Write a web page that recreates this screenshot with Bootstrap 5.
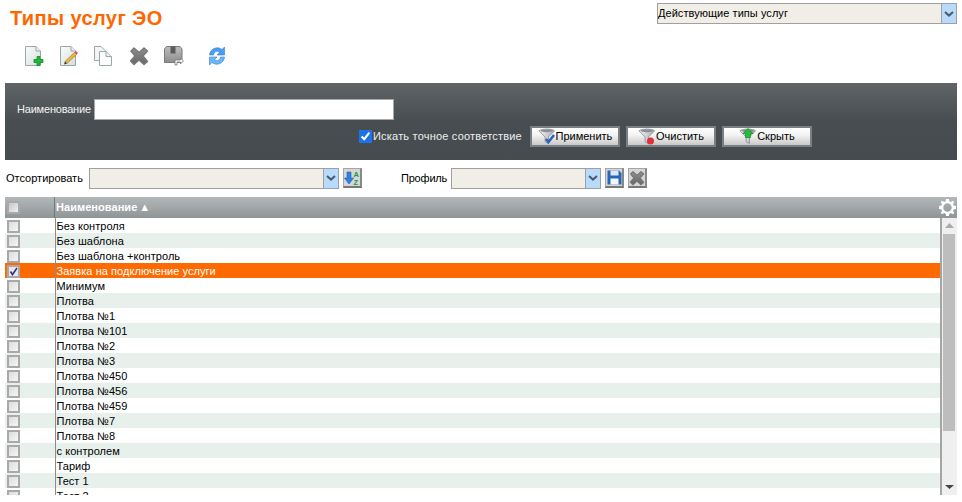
<!DOCTYPE html>
<html lang="ru">
<head>
  <meta charset="UTF-8" />
  <meta name="viewport" content="width=device-width, initial-scale=1.0"/>
  <title>Типы услуг ЭО</title>
  <link href="https://cdn.jsdelivr.net/npm/bootstrap@5.3.0/dist/css/bootstrap.min.css" rel="stylesheet"/>
  <style>
    html, body { height: 100%; overflow: hidden; }
    body {
      background: #fff;
      color: #000;
      font-family: "Liberation Sans", Arial, sans-serif;
      font-size: 11px;
      line-height: 15px;
      letter-spacing: .05px;
    }
    .page-wrap { padding: 3px 5px 0 5px; width: 962px; }

    .top-row { height: 42px; }
    .page-title {
      margin: 3px 0 0 5px;
      color: #ff6600;
      font-size: 20px;
      line-height: 24px;
      font-weight: 700;
      letter-spacing: .4px;
    }
    .fake-select {
      display: flex;
      height: 21px;
      border: 1px solid #a0a0a0;
      background: #f1eee7;
    }
    .fake-select .val { flex: 1 1 auto; padding: 2px 0 0 0; white-space: nowrap; overflow: hidden; }
    .fake-select .arr {
      width: 15px;
      flex: 0 0 15px;
      background: #b9dbfb;
      border-left: 1px solid #a0a0a0;
      display: flex; align-items: center; justify-content: center;
    }
    .sel-state { width: 300px; }
    .sel-sort { width: 250px; }
    .sel-prof { width: 150px; }

    .tool-row { height: 38px; padding: 1px 0 0 20px; }
    .tool-btn { display: block; width: 20px; height: 20px; }
    .tool-row .tool-btn { margin-right: 14.5px; }
    .tool-row .tool-btn.far { margin-left: 1px; margin-right: 23px; }

    .filter-box {
      height: 77px;
      padding: 16px 0 0 12px;
      color: #fff;
      background: linear-gradient(#5f6467 0, #484d51 50%, #464b4f 100%);
    }
    .filter-box input[type=text] {
      display: block;
      width: 300px;
      height: 21px;
      margin-left: 3px;
      border: 1px solid #a8a8a8;
      background: #fff;
      padding: 0 2px;
    }
    .filter-lbl { color: #f4f4f4; letter-spacing: -.2px; white-space: nowrap; }
    .opts-row { margin-top: 6px; margin-left: 342px; height: 21px; }
    .opts-row input { width: 13px; height: 13px; margin: 0 1px 0 0; accent-color: #1a73e8; }
    .opts-row .chk-lbl { margin-right: 8px; color: #eee; letter-spacing: .2px; }
    .flt-btn {
      width: 90px;
      height: 21px;
      margin-right: 6px;
      padding: 0;
      color: #000;
      font-size: 11px;
      border: 2px solid #7c7f82;
      border-radius: 0;
      background: linear-gradient(#fff 0, #f4f4f4 40%, #c9c9c9 100%);
      display: flex; align-items: center; justify-content: center;
    }

    .sort-row { height: 20px; margin: 8px 0 9px 0; }
    .sort-lbl { margin: 0 5px 0 1px; width: 78px; letter-spacing: 0; white-space: nowrap; }
    .prof-lbl { margin: 0 5px 0 39px; width: 45px; letter-spacing: -.2px; white-space: nowrap; }
    .sq-btn {
      width: 19px; height: 20px; margin-left: 4px;
      background: #d6d6d6;
      border: 1px solid #a5a5a5;
      border-bottom: 2px solid #777;
      border-right: 2px solid #888;
      display: flex; align-items: center; justify-content: center;
      padding: 0;
    }

    .grid-head {
      height: 21px;
      color: #fff;
      font-weight: 700;
      background: linear-gradient(#b3b8bb 0, #8f9497 100%);
    }
    .grid-head .cell-chk { width: 50px; flex: 0 0 50px; border-right: 1px solid #777; height: 100%; padding: 4px 0 0 2px; }
    .grid-head .cell-name { padding-left: 1px; flex: 1 1 auto; }
    .grid-head .sort-mark { margin-left: 2px; }
    .grid-head .gear { margin-right: 1px; display: block; }

    .grid-body { height: 277px; overflow: hidden; }
    .grid-rows { width: 937px; flex: 0 0 937px; border-right: 2px solid #a5a5a5; overflow: hidden; }
    .grid-tbl { width: 100%; margin: 0; border-collapse: collapse; table-layout: fixed; }
    .grid-tbl td { height: 15px; padding: 0; line-height: 15px; border: 0; overflow: hidden; white-space: nowrap; }
    .grid-tbl .c1 { width: 50px; border-right: 1px solid #8b8b8b; padding-left: 2px; }
    .grid-tbl .c2 { padding: 1px 0 0 1px; line-height: 14px; }
    .grid-tbl tr:nth-child(even) td { background: #e8f0ec; }
    .grid-tbl tr.picked td { background: #ff6a00; color: #fff; }
    .row-chk {
      display: block;
      appearance: none;
      width: 13px; height: 13px; margin: 1px 0 0 0;
      border: 2px solid #a9a9a9;
      background: linear-gradient(135deg, #dcdcdc, #f6f6f6);
    }
    .row-chk:checked {
      background: #e6e6ee url("data:image/svg+xml,%3Csvg xmlns='http://www.w3.org/2000/svg' viewBox='0 0 9 9'%3E%3Cpath d='M1.5 4.5L3.5 7.5L8 1' fill='none' stroke='%2333337f' stroke-width='1.6'/%3E%3C/svg%3E") center/9px 9px no-repeat;
    }
    .head-chk { display: block; width: 13px; height: 13px; margin: 0; appearance: none; border: 2px solid #a9a9a9; background: linear-gradient(135deg, #c8c8c8, #efefef); }

    .scroll-col { width: 15px; flex: 0 0 15px; background: #efefef; position: relative; }
    .scroll-up { height: 15px; display: flex; justify-content: center; align-items: center; }
    .scroll-thumb { height: 197px; width: 12px; margin: 1px 0 0 1px; background: #bdbdbd; }
    .scroll-down { position: absolute; bottom: 6px; left: 0; width: 15px; display: flex; justify-content: center; }
  </style>
</head>
<body>
  <svg width="0" height="0" class="position-absolute">
    <defs>
      <linearGradient id="pg" x1="0" y1="0" x2="1" y2="1"><stop offset="0" stop-color="#fafcfc"/><stop offset="1" stop-color="#d5dedd"/></linearGradient>
      <linearGradient id="gr" x1="0" y1="0" x2="0" y2="1"><stop offset="0" stop-color="#8f8f8f"/><stop offset="1" stop-color="#666"/></linearGradient>
      <linearGradient id="fn" x1="0" y1="0" x2="1" y2="0"><stop offset="0" stop-color="#f2f3f4"/><stop offset="1" stop-color="#a9adb0"/></linearGradient>
      <linearGradient id="bx" x1="0" y1="0" x2="0" y2="1"><stop offset="0" stop-color="#bdbdbd"/><stop offset="1" stop-color="#8e8e8e"/></linearGradient>
      <symbol id="ic-x" viewBox="0 0 20 20">
        <path d="M2 5L5 2L10 6.500L15 2L18.500 5L14 10L18.500 15.500L15 18.500L10 14L5 18.500L1.500 15L6 10Z" fill="url(#gr)" stroke="#777" stroke-linejoin="round" stroke-width="1.400"/>
      </symbol>
      <symbol id="ic-arr" viewBox="0 0 10 6">
        <path d="M1 1L5 4.600L9 1" fill="none" stroke="#4a5a70" stroke-width="2"/>
      </symbol>
      <symbol id="ic-funnel" viewBox="0 0 18 18">
        <path d="M.5 3C4 .5 14 .5 17 3L10.500 9.500V16.500L7 14.500V9.500Z" fill="url(#fn)" stroke="#7f8487" stroke-width=".8"/>
        <ellipse cx="8.700" cy="3" rx="6.500" ry="1.500" fill="#8a8f92"/>
      </symbol>
    </defs>
  </svg>

  <div class="page-wrap">
    <div class="top-row d-flex justify-content-between align-items-start">
      <h1 class="page-title">Типы услуг ЭО</h1>
      <div class="fake-select sel-state">
        <span class="val">Действующие типы услуг</span>
        <span class="arr"><svg width="10" height="6"><use href="#ic-arr"/></svg></span>
      </div>
    </div>

    <div class="tool-row d-flex align-items-start">
      <svg class="tool-btn" viewBox="0 0 20 20">
        <path d="M.5 .5H11L15.500 5V19.500H.5Z" fill="url(#pg)" stroke="#9aa8a8"/>
        <path d="M11 .5V5H15.500" fill="#e8eeee" stroke="#9aa8a8"/>
        <path d="M12 10.500H15V13.500H18V16.500H15V19.500H12V16.500H9V13.500H12Z" fill="#22b83a" stroke="#0f8a24" stroke-width=".8"/>
      </svg>
      <svg class="tool-btn" viewBox="0 0 20 20">
        <path d="M.5 .5H11L15.500 5V19.500H.5Z" fill="url(#pg)" stroke="#9aa8a8"/>
        <path d="M11 .5V5H15.500" fill="#e8eeee" stroke="#9aa8a8"/>
        <path d="M5 15.500L14.500 6.500L16.500 8.500L7 17.500Z" fill="#e9b93f" stroke="#a07d22" stroke-width=".7"/>
        <path d="M14.500 6.500L16 5L18 7L16.500 8.500Z" fill="#e2526a"/>
        <path d="M5 15.500L4 18.500L7 17.500Z" fill="#333"/>
      </svg>
      <svg class="tool-btn" viewBox="0 0 20 20">
        <path d="M.5 .5H7L11 4.500V14.500H.5Z" fill="#f1f4f4" stroke="#9aa8a8"/>
        <path d="M5.500 5.500H12L17.500 10.500V19.500H5.500Z" fill="#fbfcfc" stroke="#9aa8a8"/>
        <path d="M12 5.500V10.500H17.500" fill="#e8eeee" stroke="#9aa8a8"/>
      </svg>
      <svg class="tool-btn"><use href="#ic-x"/></svg>
      <svg class="tool-btn far" viewBox="0 0 20 20">
        <path d="M.5 3L2.500 .5H16L18 3V16.500H.5Z" fill="url(#bx)" stroke="#7a7a7a"/>
        <rect x="6.500" y=".5" width="5" height="7" fill="#5a5a5a"/>
        <path d="M11 14H16.500V12L19.500 15L16.500 18V16H13V19H11Z" fill="#fff" stroke="#777" stroke-width=".8"/>
      </svg>
      <svg class="tool-btn" viewBox="0 0 20 20">
        <path d="M2.500 9C3 3 10 -.5 15 3.500L17.500 1V9H10L12.500 6.500C9.500 4 7 6 6.500 9Z" fill="#4a9df0" stroke="#2f80d8" stroke-width=".6"/>
        <path d="M17.500 11C17 17 10 20.500 5 16.500L2.500 19V11H10L7.500 13.500C10.500 16 13 14 13.500 11Z" fill="#6db5f5" stroke="#2f80d8" stroke-width=".6"/>
      </svg>
    </div>

    <div class="filter-box">
      <div class="d-flex align-items-center">
        <label class="filter-lbl" for="fName">Наименование</label>
        <input type="text" id="fName" />
      </div>
      <div class="opts-row d-flex align-items-center">
        <input type="checkbox" id="fExact" checked />
        <label class="chk-lbl" for="fExact">Искать точное соответствие</label>
        <button type="button" class="flt-btn">
          <svg width="18" height="17"><use href="#ic-funnel"/><path d="M8 11L10.500 14L16 7" fill="none" stroke="#2a5fc0" stroke-width="2.500"/></svg>Применить
        </button>
        <button type="button" class="flt-btn">
          <svg width="18" height="17"><use href="#ic-funnel"/><circle cx="12.500" cy="13" r="3.500" fill="#e0303a"/></svg>Очистить
        </button>
        <button type="button" class="flt-btn">
          <svg width="18" height="17"><use href="#ic-funnel"/><path d="M9 .5L14 5.500H11.500V9.500H6.500V5.500H4Z" fill="#22c03a" stroke="#128a24" stroke-width=".7"/></svg>Скрыть
        </button>
      </div>
    </div>

    <div class="sort-row d-flex align-items-center">
      <label class="sort-lbl">Отсортировать</label>
      <div class="fake-select sel-sort">
        <span class="val"></span>
        <span class="arr"><svg width="10" height="6"><use href="#ic-arr"/></svg></span>
      </div>
      <button type="button" class="sq-btn">
        <svg width="16" height="16" viewBox="0 0 16 16">
          <path d="M3 2H7V8H9.500L5 14L.5 8H3Z" fill="#2f80e0" stroke="#1d5fb0" stroke-width=".6"/>
          <text x="9.500" y="7" font-size="7.500" font-weight="700" font-family="Liberation Sans" fill="#1e9a36">A</text>
          <text x="9.500" y="15" font-size="7.500" font-weight="700" font-family="Liberation Sans" fill="#1e9a36">Z</text>
        </svg>
      </button>
      <label class="prof-lbl">Профиль</label>
      <div class="fake-select sel-prof">
        <span class="val"></span>
        <span class="arr"><svg width="10" height="6"><use href="#ic-arr"/></svg></span>
      </div>
      <button type="button" class="sq-btn">
        <svg width="15" height="15" viewBox="0 0 15 15">
          <path d="M.5 .5H12L14.500 3V14.500H.5Z" fill="#2a66b8"/>
          <rect x="3.500" y=".5" width="8" height="5" fill="#dfe8f2"/>
          <rect x="3.500" y="8.500" width="8" height="6" fill="#f2f5f8"/>
        </svg>
      </button>
      <button type="button" class="sq-btn">
        <svg width="16" height="16"><use href="#ic-x"/></svg>
      </button>
    </div>

    <div class="grid-head d-flex align-items-center">
      <div class="cell-chk"><input type="checkbox" class="head-chk" aria-label="все" /></div>
      <div class="cell-name">Наименование<span class="sort-mark">▲</span></div>
      <svg class="gear" width="17" height="17" viewBox="0 0 18 18">
        <path fill="#fff" fill-rule="evenodd" d="M7.500 0H10.500L11 2.500L12.500 3.200L14.700 1.800L16.200 3.300L14.800 5.500L15.500 7L18 7.500V10.500L15.500 11L14.800 12.500L16.200 14.700L14.700 16.200L12.500 14.800L11 15.500L10.500 18H7.500L7 15.500L5.500 14.800L3.300 16.200L1.800 14.700L3.200 12.500L2.500 11L0 10.500V7.500L2.500 7L3.200 5.500L1.800 3.300L3.300 1.800L5.500 3.200L7 2.500ZM9 4.500A4.500 4.500 0 1 0 9 13.500A4.500 4.500 0 1 0 9 4.500Z"/>
      </svg>
    </div>

    <div class="grid-body d-flex">
      <div class="grid-rows">
        <table class="grid-tbl">
          <tbody>
            <tr><td class="c1"><input type="checkbox" class="row-chk" /></td><td class="c2">Без контроля</td></tr>
            <tr><td class="c1"><input type="checkbox" class="row-chk" /></td><td class="c2">Без шаблона</td></tr>
            <tr><td class="c1"><input type="checkbox" class="row-chk" /></td><td class="c2">Без шаблона +контроль</td></tr>
            <tr class="picked"><td class="c1"><input type="checkbox" class="row-chk" checked /></td><td class="c2">Заявка на подключение услуги</td></tr>
            <tr><td class="c1"><input type="checkbox" class="row-chk" /></td><td class="c2">Минимум</td></tr>
            <tr><td class="c1"><input type="checkbox" class="row-chk" /></td><td class="c2">Плотва</td></tr>
            <tr><td class="c1"><input type="checkbox" class="row-chk" /></td><td class="c2">Плотва №1</td></tr>
            <tr><td class="c1"><input type="checkbox" class="row-chk" /></td><td class="c2">Плотва №101</td></tr>
            <tr><td class="c1"><input type="checkbox" class="row-chk" /></td><td class="c2">Плотва №2</td></tr>
            <tr><td class="c1"><input type="checkbox" class="row-chk" /></td><td class="c2">Плотва №3</td></tr>
            <tr><td class="c1"><input type="checkbox" class="row-chk" /></td><td class="c2">Плотва №450</td></tr>
            <tr><td class="c1"><input type="checkbox" class="row-chk" /></td><td class="c2">Плотва №456</td></tr>
            <tr><td class="c1"><input type="checkbox" class="row-chk" /></td><td class="c2">Плотва №459</td></tr>
            <tr><td class="c1"><input type="checkbox" class="row-chk" /></td><td class="c2">Плотва №7</td></tr>
            <tr><td class="c1"><input type="checkbox" class="row-chk" /></td><td class="c2">Плотва №8</td></tr>
            <tr><td class="c1"><input type="checkbox" class="row-chk" /></td><td class="c2">с контролем</td></tr>
            <tr><td class="c1"><input type="checkbox" class="row-chk" /></td><td class="c2">Тариф</td></tr>
            <tr><td class="c1"><input type="checkbox" class="row-chk" /></td><td class="c2">Тест 1</td></tr>
            <tr><td class="c1"><input type="checkbox" class="row-chk" /></td><td class="c2">Тест 2</td></tr>
          </tbody>
        </table>
      </div>
      <div class="scroll-col">
        <div class="scroll-up"><svg width="9" height="5"><path d="M0 5L4.500 0L9 5Z" fill="#aaa"/></svg></div>
        <div class="scroll-thumb"></div>
        <div class="scroll-down"><svg width="9" height="4"><path d="M0 0H9L4.500 4Z" fill="#444"/></svg></div>
      </div>
    </div>
  </div>
  <script src="https://cdn.jsdelivr.net/npm/bootstrap@5.3.0/dist/js/bootstrap.bundle.min.js"></script>
</body>
</html>
